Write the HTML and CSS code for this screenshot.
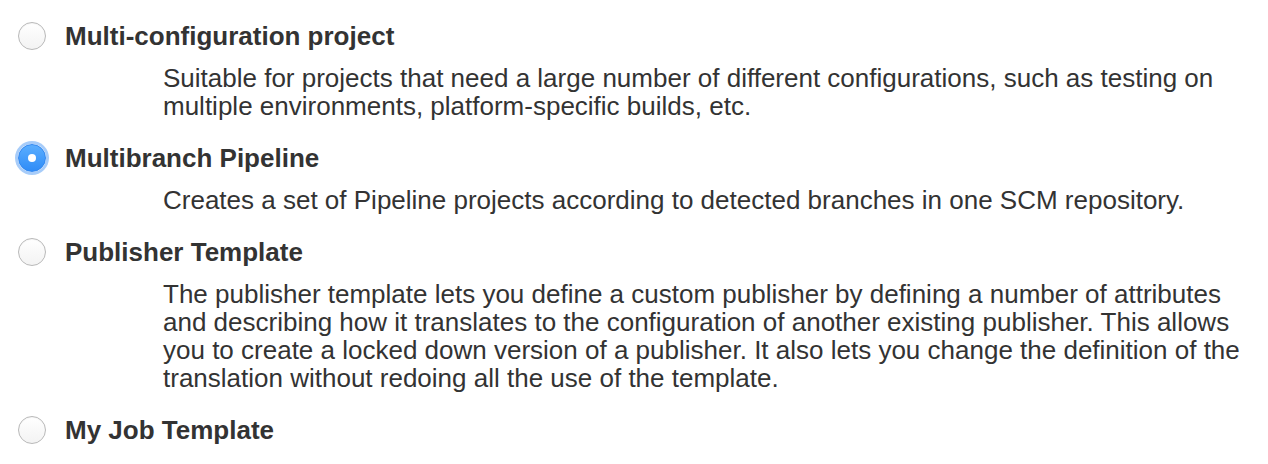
FILE: index.html
```html
<!DOCTYPE html>
<html>
<head>
<meta charset="utf-8">
<link rel="stylesheet" href="styles.css">
</head>
<body>
<div class="list">
  <div class="item">
    <label class="head"><span class="radio"></span><span class="title">Multi-configuration project</span></label>
    <div class="desc">Suitable for projects that need a large number of different configurations, such as testing on multiple environments, platform-specific builds, etc.</div>
  </div>
  <div class="item">
    <label class="head"><span class="radio checked"></span><span class="title">Multibranch Pipeline</span></label>
    <div class="desc">Creates a set of Pipeline projects according to detected branches in one SCM repository.</div>
  </div>
  <div class="item">
    <label class="head"><span class="radio"></span><span class="title">Publisher Template</span></label>
    <div class="desc">The publisher template lets you define a custom publisher by defining a number of attributes and describing how it translates to the configuration of another existing publisher. This allows you to create a locked down version of a publisher. It also lets you change the definition of the translation without redoing all the use of the template.</div>
  </div>
  <div class="item">
    <label class="head"><span class="radio"></span><span class="title">My Job Template</span></label>
  </div>
</div>
</body>
</html>
```

FILE: styles.css
```css
html, body {
  margin: 0;
  padding: 0;
  background: #ffffff;
}
body {
  font-family: "Liberation Sans", Arial, Helvetica, sans-serif;
  color: #333333;
  width: 1268px;
  height: 464px;
  overflow: hidden;
}
.list {
  padding: 16px 0 0 18px;
  display: flex;
  flex-direction: column;
}
.item {
  display: flex;
  flex-direction: column;
  margin-bottom: 18px;
}
.head {
  display: flex;
  align-items: center;
  gap: 19px;
  height: 40px;
}
.radio {
  width: 28px;
  height: 28px;
  box-sizing: border-box;
  border-radius: 50%;
  border: 1px solid #b9b9b9;
  background: linear-gradient(#ffffff, #f3f3f3);
  box-shadow: inset 0 1px 1px rgba(0,0,0,0.04);
  flex: none;
  position: relative;
}
.radio.checked {
  border: 1px solid #2f86f0;
  background: linear-gradient(#5aaeff, #2f8cf7);
  box-shadow: 0 0 0 3px rgba(130, 183, 247, 0.7);
}
.radio.checked::after {
  content: "";
  position: absolute;
  left: 50%;
  top: 50%;
  width: 8px;
  height: 8px;
  margin: -4px 0 0 -4px;
  border-radius: 50%;
  background: #ffffff;
}
.title {
  font-weight: bold;
  font-size: 26px;
  line-height: 40px;
}
.desc {
  margin: 8px 0 0 145px;
  width: 1092px;
  font-size: 26px;
  line-height: 28px;
}
```
